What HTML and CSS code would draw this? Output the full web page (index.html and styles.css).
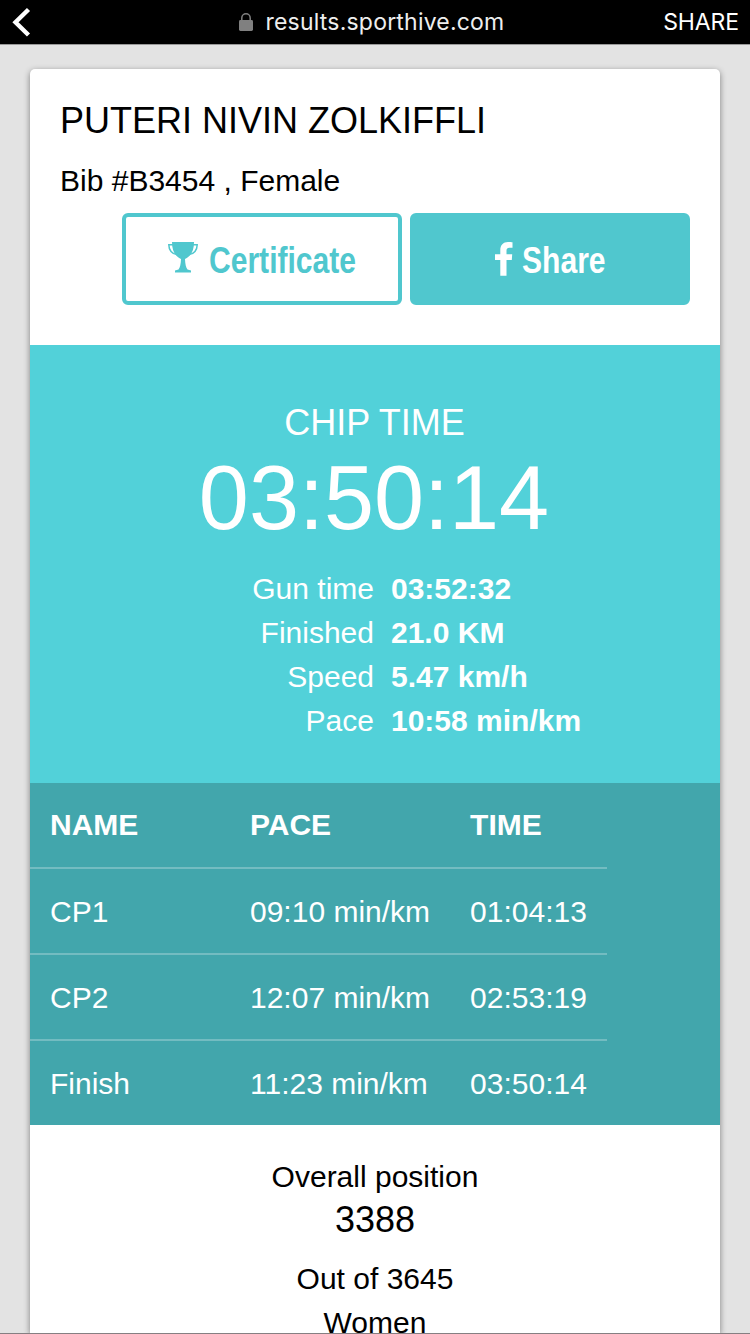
FILE: index.html
```html
<!DOCTYPE html>
<html lang="en">
<head>
    <meta charset="UTF-8">
    <meta name="viewport" content="width=device-width, initial-scale=1.0">
    <title>Sporthive Results</title>
    <link rel="stylesheet" href="styles.css">
</head>
<body>
    <header class="topbar">
        <svg class="back" width="26" height="30" viewBox="0 0 26 30">
            <path d="M22.500 2.500 L9.500 15.300 L22.500 28" fill="none" stroke="#fff" stroke-width="4.4"/>
        </svg>
        <div class="address">
            <svg class="lock" width="14" height="18" viewBox="0 0 14 18">
                <path d="M2.8 8 V5 a4.2 4.2 0 0 1 8.4 0 V8" fill="none" stroke="#808080" stroke-width="1.5"/>
                <rect x="0" y="7" width="14" height="11" rx="1.4" fill="#808080"/>
            </svg>
            <span class="url">results.sporthive.com</span>
        </div>
        <span class="share-link">SHARE</span>
    </header>

    <main class="card">
        <section class="runner">
            <h1>PUTERI NIVIN ZOLKIFFLI</h1>
            <p class="bib">Bib #B3454 , Female</p>
            <div class="buttons">
                <a class="btn btn-outline">
                    <svg class="trophy" width="30" height="31" viewBox="0 0 30 31" fill="#50c7ce">
                        <path d="M4 0 H26 C26 8 23.5 14 17 17 C17.2 22 18 25.5 19.5 27.5 L23 28.5 V30.5 H7 V28.5 L10.5 27.5 C12 25.5 12.800 22 13 17 C6.500 14 4 8 4 0 Z"/>
                        <path d="M5 2.700 H0.800 C0.800 8 4 12 9 12.500 M25 2.700 H29.200 C29.200 8 26 12 21 12.500" fill="none" stroke="#50c7ce" stroke-width="1.500"/>
                    </svg>
                    <span class="btn-text certificate">Certificate</span>
                </a>
                <a class="btn btn-solid">
                    <svg class="facebook" width="18" height="34" viewBox="0 0 18 34" fill="#fff">
                        <path d="M17.500 0.200 V5.700 H14.500 C12 5.700 11.500 7 11.500 8.800 V12.300 H17.200 L16.800 18 H11.500 V33.700 H5.300 V18 H0 V12.300 H5.300 V8 C5.300 3 8.300 0 13 0 C15 0 16.800 0.100 17.500 0.200 Z"/>
                    </svg>
                    <span class="btn-text share">Share</span>
                </a>
            </div>
        </section>

        <section class="chip">
            <h2>CHIP TIME</h2>
            <div class="chip-time">03:50:14</div>
            <dl class="stats">
                <dt>Gun time</dt><dd>03:52:32</dd>
                <dt>Finished</dt><dd>21.0 KM</dd>
                <dt>Speed</dt><dd>5.47 km/h</dd>
                <dt>Pace</dt><dd>10:58 min/km</dd>
            </dl>
        </section>

        <section class="splits">
            <table>
                <thead>
                    <tr><th>NAME</th><th>PACE</th><th>TIME</th></tr>
                </thead>
                <tbody>
                    <tr><td>CP1</td><td>09:10 min/km</td><td>01:04:13</td></tr>
                    <tr><td>CP2</td><td>12:07 min/km</td><td>02:53:19</td></tr>
                    <tr><td>Finish</td><td>11:23 min/km</td><td>03:50:14</td></tr>
                </tbody>
            </table>
        </section>

        <section class="position">
            <p>Overall position</p>
            <p class="rank">3388</p>
            <p>Out of 3645</p>
            <p>Women</p>
        </section>
    </main>
</body>
</html>
```

FILE: styles.css
```css
* { box-sizing: border-box; margin: 0; padding: 0; }

body {
    display: flex;
    flex-direction: column;
    height: 1334px;
    overflow: hidden;
    background: #e3e3e3;
    border-bottom: 1px solid #857f82;
    font-family: "Liberation Sans", Arial, sans-serif;
    font-size: 30px;
    line-height: 44px;
    color: #000;
}

/* browser bar */
.topbar {
    display: grid;
    grid-template-columns: 1fr auto 1fr;
    align-items: center;
    flex: none;
    height: 45px;
    padding: 0 11px 0 6px;
    background: #000;
    border-bottom: 1px solid #999;
    font-family: Inter, Roboto, sans-serif;
    color: #fff;
}
.back { display: block; }
.address { display: flex; align-items: center; gap: 13px; padding-right: 2px; }
.url { font-size: 23px; letter-spacing: 0.2px; color: #eee; }
.share-link { justify-self: end; font-size: 23px; line-height: 42px; letter-spacing: -0.1px; }

.card {
    flex: 1;
    min-height: 0;
    margin: 24px 30px 0;
    overflow: hidden;
    background: #fff;
    border-radius: 5px 5px 0 0;
    box-shadow: 0 2px 6px rgba(0,0,0,0.45);
}

.runner { height: 276px; padding: 27px 30px 0; }
h1 { font-size: 36px; font-weight: normal; line-height: 50px; }
.bib { margin-top: 13px; }
.buttons { display: flex; justify-content: flex-end; gap: 8px; margin-top: 10px; }
.btn {
    display: flex;
    justify-content: center;
    align-items: center;
    width: 280px;
    height: 92px;
    border: 4px solid #50c7ce;
    border-radius: 6px;
    font-size: 36px;
    font-weight: bold;
}
.btn-outline { gap: 11px; color: #50c7ce; }
.btn-solid { gap: 9px; background: #50c7ce; color: #fff; }
.trophy { margin-bottom: 3px; }
/* condensed lettering */
.btn-text {
    padding-top: 4px;
    white-space: nowrap;
    transform: scaleX(0.835);
    transform-origin: left;
}
.certificate { width: 148px; }
.share { width: 84px; }

.chip {
    height: 438px;
    padding-top: 53px;
    background: #52d1d9;
    color: #fff;
    text-align: center;
}
h2 { padding-right: 1px; font-size: 36px; font-weight: normal; line-height: 50px; }
.chip-time { padding-right: 2px; font-size: 90px; line-height: 100px; }
.stats {
    display: grid;
    grid-template-columns: 344px 1fr;
    column-gap: 17px;
    margin-top: 19px;
}
dt { text-align: right; }
dd { text-align: left; font-weight: bold; }

.splits { height: 342px; background: #42a6ac; color: #fff; }
table { border-collapse: separate; border-spacing: 0; }
th, td { padding: 21px 20px 19px; text-align: left; white-space: nowrap; }
th { padding: 20px; }
td { border-top: 2px solid #73bcc1; }
th:first-child { width: 200px; }
th:nth-child(2) { width: 220px; }

.position { padding-top: 30px; text-align: center; }
.rank { margin-bottom: 16px; font-size: 36px; line-height: 42px; }
```
